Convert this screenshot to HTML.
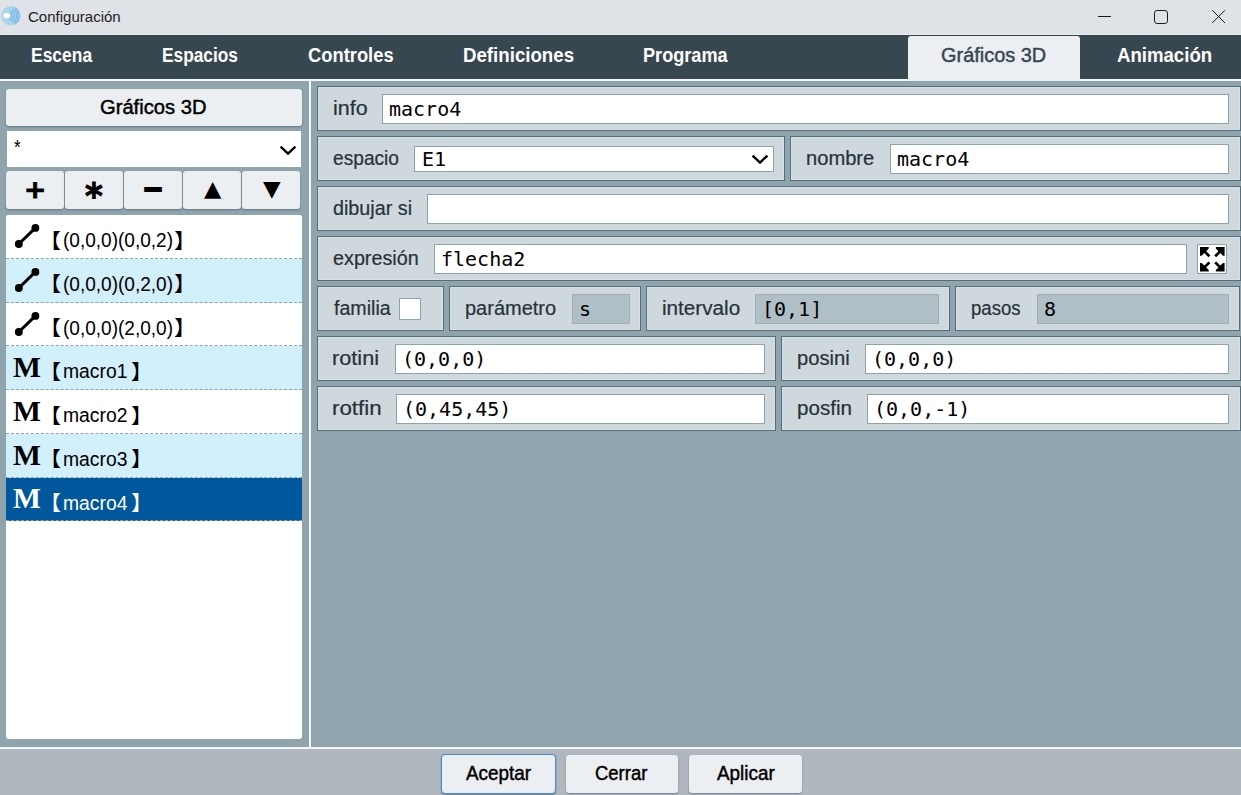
<!DOCTYPE html>
<html lang="es"><head><meta charset="utf-8"><title>Configuración</title>
<style>
html,body{margin:0;padding:0}
body{width:1241px;height:795px;overflow:hidden;background:#90a4ae;position:relative;font-family:'Liberation Sans',sans-serif}
div{position:absolute;box-sizing:border-box}
svg{position:absolute;overflow:visible}
.t{position:absolute;white-space:pre;line-height:1;transform-origin:0 0;display:block}
.btn{background:#eceff1;border-radius:3px;box-shadow:0 1px 2px rgba(40,60,70,.45)}
.row{background:#cfd8dc;border:1px solid #546e7a;box-shadow:inset 0 0 0 1px rgba(255,255,255,.22)}
.inp{background:#fff;border:1px solid #8fa3ad}
.dis{background:#b0bec5;border-color:#9eafb8}
</style></head>
<body>
<div style="left:0px;top:0px;width:1241px;height:35px;background:#dfe2e7;border-bottom:1px solid #e7e9ed"></div>
<svg width="22" height="22" viewBox="0 0 22 22" style="position:absolute;left:0;top:5px">
<circle cx="11" cy="10.8" r="9.8" fill="#a9d5ea"/>
<g fill="none" stroke="#6ab2ea" stroke-width="1.05">
<path d="M11.5 5.2a7 7 0 0 1 0 11.2"/><path d="M13.3 3.9a8.6 8.6 0 0 1 0 13.8"/><path d="M15.2 3.2a9.6 9.6 0 0 1 0 15.2"/><path d="M9.8 6.6a5.4 5.4 0 0 1 0 8.4"/>
</g>
<ellipse cx="6.8" cy="10.6" rx="3.5" ry="2.6" fill="#fff"/>
</svg>
<svg width="140" height="35" viewBox="0 0 140 35" style="position:absolute;left:1090px;top:0" fill="none" stroke="#1a1a1a" stroke-width="1">
<path d="M8 16.5H21"/><rect x="64.5" y="10.5" width="13" height="13" rx="2.6"/><path d="M122.2 10.2L135 23M135 10.2L122.2 23"/></svg>
<div style="left:0px;top:35px;width:1241px;height:44px;background:#37474f"></div>
<div style="left:0px;top:79px;width:1241px;height:2px;background:#f5f7f8"></div>
<div style="left:908px;top:36px;width:172px;height:45px;background:#eceff1;border-radius:3px 3px 0 0"></div>
<div style="left:309px;top:81px;width:2px;height:666px;background:#f5f7f8"></div>
<div style="left:0px;top:747px;width:1241px;height:2px;background:#f5f7f8"></div>
<div style="left:0px;top:749px;width:1241px;height:46px;background:#b0b7bf"></div>
<div class="btn" style="left:6px;top:89px;width:296px;height:37px;"></div>
<div style="left:7px;top:131px;width:294px;height:36px;background:#fff"></div>
<svg width="18" height="11" viewBox="0 0 18 11" style="position:absolute;left:279px;top:144.5px" fill="none" stroke="#000" stroke-width="2.4"><path d="M1.6 1.6L9 8.6L16.4 1.6"/></svg>
<div class="btn" style="left:6px;top:171px;width:58px;height:38px;"></div>
<div class="btn" style="left:65px;top:171px;width:58px;height:38px;"></div>
<div class="btn" style="left:124px;top:171px;width:58px;height:38px;"></div>
<div class="btn" style="left:183px;top:171px;width:58px;height:38px;"></div>
<div class="btn" style="left:242px;top:171px;width:58px;height:38px;"></div>
<div style="left:6px;top:215px;width:296px;height:524px;background:#fff;border-radius:3px"></div>
<div style="left:6px;top:215.0px;width:296px;height:43.75px;background:#fff;border-bottom:1px dashed #8fa3ad;box-sizing:border-box;border-radius:3px 3px 0 0;"></div>
<svg width="30" height="26" viewBox="0 0 30 26" style="position:absolute;left:12px;top:222.0px"><path d="M6.8 22L23.4 5.9" stroke="#000" stroke-width="3" fill="none"/><circle cx="6.8" cy="22" r="3.95"/><circle cx="23.4" cy="5.9" r="3.95"/></svg>
<div style="left:6px;top:258.75px;width:296px;height:43.75px;background:#d2effc;border-bottom:1px dashed #8fa3ad;box-sizing:border-box;"></div>
<svg width="30" height="26" viewBox="0 0 30 26" style="position:absolute;left:12px;top:265.75px"><path d="M6.8 22L23.4 5.9" stroke="#000" stroke-width="3" fill="none"/><circle cx="6.8" cy="22" r="3.95"/><circle cx="23.4" cy="5.9" r="3.95"/></svg>
<div style="left:6px;top:302.5px;width:296px;height:43.75px;background:#fff;border-bottom:1px dashed #8fa3ad;box-sizing:border-box;"></div>
<svg width="30" height="26" viewBox="0 0 30 26" style="position:absolute;left:12px;top:309.5px"><path d="M6.8 22L23.4 5.9" stroke="#000" stroke-width="3" fill="none"/><circle cx="6.8" cy="22" r="3.95"/><circle cx="23.4" cy="5.9" r="3.95"/></svg>
<div style="left:6px;top:346.25px;width:296px;height:43.75px;background:#d2effc;border-bottom:1px dashed #8fa3ad;box-sizing:border-box;"></div>
<div style="left:6px;top:390.0px;width:296px;height:43.75px;background:#fff;border-bottom:1px dashed #8fa3ad;box-sizing:border-box;"></div>
<div style="left:6px;top:433.75px;width:296px;height:43.75px;background:#d2effc;border-bottom:1px dashed #8fa3ad;box-sizing:border-box;"></div>
<div style="left:6px;top:477.5px;width:296px;height:43.75px;background:#01579b;border-bottom:1px dashed #8fa3ad;box-sizing:border-box;"></div>
<div class="row" style="left:317px;top:86px;width:924px;height:45px;"></div>
<div class="inp" style="left:382px;top:94px;width:847px;height:30px;"></div>
<div class="row" style="left:317px;top:136px;width:468px;height:45px;"></div>
<div class="inp" style="left:414px;top:146px;width:360px;height:26px;"></div>
<svg width="18" height="11" viewBox="0 0 18 11" style="position:absolute;left:751px;top:153.5px" fill="none" stroke="#000" stroke-width="2.4"><path d="M1.6 1.6L9 8.6L16.4 1.6"/></svg>
<div class="row" style="left:790px;top:136px;width:451px;height:45px;"></div>
<div class="inp" style="left:890px;top:144px;width:339px;height:30px;"></div>
<div class="row" style="left:317px;top:186px;width:924px;height:45px;"></div>
<div class="inp" style="left:427px;top:194px;width:802px;height:30px;"></div>
<div class="row" style="left:317px;top:236px;width:924px;height:45px;"></div>
<div class="inp" style="left:434px;top:244px;width:753px;height:30px;"></div>
<div class="inp" style="left:1197px;top:244px;width:30px;height:30px;"></div>
<svg width="30" height="30" viewBox="0 0 30 30" style="position:absolute;left:1197px;top:244px" fill="#000">
<path d="M3 3.1H11.75V4.6L9.15 7.2L13.35 11.25L11.45 13.15L7.25 9.1L4.6 11.7H3Z"/>
<path transform="translate(30.6,0) scale(-1,1)" d="M3 3.1H11.75V4.6L9.15 7.2L13.35 11.25L11.45 13.15L7.25 9.1L4.6 11.7H3Z"/>
<path transform="translate(0,30.6) scale(1,-1)" d="M3 3.1H11.75V4.6L9.15 7.2L13.35 11.25L11.45 13.15L7.25 9.1L4.6 11.7H3Z"/>
<path transform="translate(30.6,30.6) scale(-1,-1)" d="M3 3.1H11.75V4.6L9.15 7.2L13.35 11.25L11.45 13.15L7.25 9.1L4.6 11.7H3Z"/>
</svg>
<div class="row" style="left:317px;top:286px;width:127px;height:45px;"></div>
<div style="left:399px;top:298px;width:22px;height:22px;background:#fff;border:1px solid #90a4ae;box-sizing:border-box"></div>
<div class="row" style="left:449px;top:286px;width:192px;height:45px;"></div>
<div class="inp dis" style="left:572px;top:294px;width:58px;height:30px;"></div>
<div class="row" style="left:646px;top:286px;width:304px;height:45px;"></div>
<div class="inp dis" style="left:755px;top:294px;width:184px;height:30px;"></div>
<div class="row" style="left:955px;top:286px;width:285px;height:45px;"></div>
<div class="inp dis" style="left:1037px;top:294px;width:192px;height:30px;"></div>
<div class="row" style="left:317px;top:336px;width:459px;height:45px;"></div>
<div class="inp" style="left:395px;top:344px;width:370px;height:30px;"></div>
<div class="row" style="left:781px;top:336px;width:460px;height:45px;"></div>
<div class="inp" style="left:865px;top:344px;width:364px;height:30px;"></div>
<div class="row" style="left:317px;top:386px;width:459px;height:45px;"></div>
<div class="inp" style="left:396px;top:394px;width:369px;height:30px;"></div>
<div class="row" style="left:781px;top:386px;width:460px;height:45px;"></div>
<div class="inp" style="left:867px;top:394px;width:362px;height:30px;"></div>
<div class="btn" style="left:441px;top:754px;width:115px;height:40px;border:1px solid #3b8ee0;box-sizing:border-box;border-radius:4px"></div>
<div class="btn" style="left:566px;top:755px;width:112px;height:38px;"></div>
<div class="btn" style="left:689px;top:755px;width:113px;height:38px;"></div>
<span class="t" style="left:27.75px;top:9.30px;font-size:15.2px;font-family:'Liberation Sans', sans-serif;color:#1e1e1e;transform:scaleX(0.9891);">Configuración</span>
<span class="t" style="left:30.63px;top:44.80px;font-size:20px;font-weight:bold;font-family:'Liberation Sans', sans-serif;color:#fff;transform:scaleX(0.8724);">Escena</span>
<span class="t" style="left:162.13px;top:44.80px;font-size:20px;font-weight:bold;font-family:'Liberation Sans', sans-serif;color:#fff;transform:scaleX(0.8651);">Espacios</span>
<span class="t" style="left:308.25px;top:44.80px;font-size:20px;font-weight:bold;font-family:'Liberation Sans', sans-serif;color:#fff;transform:scaleX(0.9172);">Controles</span>
<span class="t" style="left:463.32px;top:44.80px;font-size:20px;font-weight:bold;font-family:'Liberation Sans', sans-serif;color:#fff;transform:scaleX(0.9338);">Definiciones</span>
<span class="t" style="left:643.34px;top:44.80px;font-size:20px;font-weight:bold;font-family:'Liberation Sans', sans-serif;color:#fff;transform:scaleX(0.9062);">Programa</span>
<span class="t" style="left:1116.50px;top:44.80px;font-size:20px;font-weight:bold;font-family:'Liberation Sans', sans-serif;color:#fff;transform:scaleX(0.9305);">Animación</span>
<span class="t" style="left:941.25px;top:44.80px;font-size:20px;font-family:'Liberation Sans', sans-serif;color:#37474f;transform:scaleX(0.9962);-webkit-text-stroke:0.45px currentColor;">Gráficos 3D</span>
<span class="t" style="left:100.29px;top:97.00px;font-size:20px;font-family:'Liberation Sans', sans-serif;color:#000;transform:scaleX(1.0082);-webkit-text-stroke:0.45px currentColor;">Gráficos 3D</span>
<span class="t" style="left:14.40px;top:137.00px;font-size:20px;font-family:'Liberation Sans', sans-serif;color:#000;transform:scaleX(0.8562);">*</span>
<span class="t" style="left:24.11px;top:177.18px;font-size:28px;font-weight:bold;font-family:'DejaVu Sans', 'Liberation Sans', sans-serif;color:#000;transform:scale(0.9477,0.9031);-webkit-text-stroke:1px #000;">+</span>
<span class="t" style="left:85.07px;top:178.52px;font-size:37px;font-weight:bold;font-family:'DejaVu Sans', 'Liberation Sans', sans-serif;color:#000;transform:scale(0.9189,0.9486);-webkit-text-stroke:1px #000;">*</span>
<span class="t" style="left:141.35px;top:167.94px;font-size:28px;font-weight:bold;font-family:'DejaVu Sans', 'Liberation Sans', sans-serif;color:#000;transform:scale(1.0091,1.5429);">−</span>
<span class="t" style="left:203.50px;top:177.85px;font-size:22px;font-family:'DejaVu Sans', 'Liberation Sans', sans-serif;color:#000;transform:scale(1.0237,0.9882);">▲</span>
<span class="t" style="left:262.80px;top:177.75px;font-size:22px;font-family:'DejaVu Sans', 'Liberation Sans', sans-serif;color:#000;transform:scale(1.0414,0.9882);">▼</span>
<span class="t" style="left:38.78px;top:229.58px;font-size:20px;font-family:'Noto Sans CJK SC', 'Liberation Sans', sans-serif;color:#000;transform:scale(1.1066,1.0160);">【</span>
<span class="t" style="left:62.80px;top:230.00px;font-size:20px;font-family:'Liberation Sans', sans-serif;color:#000;transform:scaleX(0.9518);">(0,0,0)(0,0,2)</span>
<span class="t" style="left:173.64px;top:229.58px;font-size:20px;font-family:'Noto Sans CJK SC', 'Liberation Sans', sans-serif;color:#000;transform:scale(1.0984,1.0160);">】</span>
<span class="t" style="left:38.78px;top:273.33px;font-size:20px;font-family:'Noto Sans CJK SC', 'Liberation Sans', sans-serif;color:#000;transform:scale(1.1066,1.0160);">【</span>
<span class="t" style="left:62.80px;top:273.75px;font-size:20px;font-family:'Liberation Sans', sans-serif;color:#000;transform:scaleX(0.9518);">(0,0,0)(0,2,0)</span>
<span class="t" style="left:173.64px;top:273.33px;font-size:20px;font-family:'Noto Sans CJK SC', 'Liberation Sans', sans-serif;color:#000;transform:scale(1.0984,1.0160);">】</span>
<span class="t" style="left:38.78px;top:317.08px;font-size:20px;font-family:'Noto Sans CJK SC', 'Liberation Sans', sans-serif;color:#000;transform:scale(1.1066,1.0160);">【</span>
<span class="t" style="left:62.80px;top:317.50px;font-size:20px;font-family:'Liberation Sans', sans-serif;color:#000;transform:scaleX(0.9518);">(0,0,0)(2,0,0)</span>
<span class="t" style="left:173.64px;top:317.08px;font-size:20px;font-family:'Noto Sans CJK SC', 'Liberation Sans', sans-serif;color:#000;transform:scale(1.0984,1.0160);">】</span>
<span class="t" style="left:13.29px;top:353.13px;font-size:28px;font-weight:bold;font-family:'Liberation Serif', serif;color:#000;transform:scale(1.0581,1.0476);">M</span>
<span class="t" style="left:38.78px;top:360.83px;font-size:20px;font-family:'Noto Sans CJK SC', 'Liberation Sans', sans-serif;color:#000;transform:scale(1.1066,1.0160);">【</span>
<span class="t" style="left:62.53px;top:361.25px;font-size:20px;font-family:'Liberation Sans', sans-serif;color:#000;transform:scaleX(0.9670);">macro1</span>
<span class="t" style="left:130.56px;top:360.83px;font-size:20px;font-family:'Noto Sans CJK SC', 'Liberation Sans', sans-serif;color:#000;transform:scale(1.0738,1.0160);">】</span>
<span class="t" style="left:13.29px;top:396.88px;font-size:28px;font-weight:bold;font-family:'Liberation Serif', serif;color:#000;transform:scale(1.0581,1.0476);">M</span>
<span class="t" style="left:38.78px;top:404.58px;font-size:20px;font-family:'Noto Sans CJK SC', 'Liberation Sans', sans-serif;color:#000;transform:scale(1.1066,1.0160);">【</span>
<span class="t" style="left:62.53px;top:405.00px;font-size:20px;font-family:'Liberation Sans', sans-serif;color:#000;transform:scaleX(0.9670);">macro2</span>
<span class="t" style="left:130.56px;top:404.58px;font-size:20px;font-family:'Noto Sans CJK SC', 'Liberation Sans', sans-serif;color:#000;transform:scale(1.0738,1.0160);">】</span>
<span class="t" style="left:13.29px;top:440.63px;font-size:28px;font-weight:bold;font-family:'Liberation Serif', serif;color:#000;transform:scale(1.0581,1.0476);">M</span>
<span class="t" style="left:38.78px;top:448.33px;font-size:20px;font-family:'Noto Sans CJK SC', 'Liberation Sans', sans-serif;color:#000;transform:scale(1.1066,1.0160);">【</span>
<span class="t" style="left:62.53px;top:448.75px;font-size:20px;font-family:'Liberation Sans', sans-serif;color:#000;transform:scaleX(0.9670);">macro3</span>
<span class="t" style="left:130.56px;top:448.33px;font-size:20px;font-family:'Noto Sans CJK SC', 'Liberation Sans', sans-serif;color:#000;transform:scale(1.0738,1.0160);">】</span>
<span class="t" style="left:13.29px;top:484.38px;font-size:28px;font-weight:bold;font-family:'Liberation Serif', serif;color:#fff;transform:scale(1.0581,1.0476);">M</span>
<span class="t" style="left:38.78px;top:492.08px;font-size:20px;font-family:'Noto Sans CJK SC', 'Liberation Sans', sans-serif;color:#fff;transform:scale(1.1066,1.0160);">【</span>
<span class="t" style="left:62.53px;top:492.50px;font-size:20px;font-family:'Liberation Sans', sans-serif;color:#fff;transform:scaleX(0.9670);">macro4</span>
<span class="t" style="left:130.56px;top:492.08px;font-size:20px;font-family:'Noto Sans CJK SC', 'Liberation Sans', sans-serif;color:#fff;transform:scale(1.0738,1.0160);">】</span>
<span class="t" style="left:333.03px;top:97.60px;font-size:20px;font-family:'Liberation Sans', sans-serif;color:#263238;transform:scaleX(1.0732);-webkit-text-stroke:0.2px currentColor;">info</span>
<span class="t" style="left:389.00px;top:99.00px;font-size:20px;font-family:'DejaVu Sans Mono', 'Liberation Mono', monospace;color:#000;">macro4</span>
<span class="t" style="left:333.10px;top:147.60px;font-size:20px;font-family:'Liberation Sans', sans-serif;color:#263238;transform:scaleX(0.9577);-webkit-text-stroke:0.2px currentColor;">espacio</span>
<span class="t" style="left:422.00px;top:149.00px;font-size:20px;font-family:'DejaVu Sans Mono', 'Liberation Mono', monospace;color:#000;">E1</span>
<span class="t" style="left:806.24px;top:147.60px;font-size:20px;font-family:'Liberation Sans', sans-serif;color:#263238;transform:scaleX(1.0069);-webkit-text-stroke:0.2px currentColor;">nombre</span>
<span class="t" style="left:897.00px;top:149.00px;font-size:20px;font-family:'DejaVu Sans Mono', 'Liberation Mono', monospace;color:#000;">macro4</span>
<span class="t" style="left:333.20px;top:197.60px;font-size:20px;font-family:'Liberation Sans', sans-serif;color:#263238;transform:scaleX(0.9875);-webkit-text-stroke:0.2px currentColor;">dibujar si</span>
<span class="t" style="left:333.20px;top:247.60px;font-size:20px;font-family:'Liberation Sans', sans-serif;color:#263238;transform:scaleX(0.9884);-webkit-text-stroke:0.2px currentColor;">expresión</span>
<span class="t" style="left:441.00px;top:249.00px;font-size:20px;font-family:'DejaVu Sans Mono', 'Liberation Mono', monospace;color:#000;">flecha2</span>
<span class="t" style="left:333.50px;top:297.60px;font-size:20px;font-family:'Liberation Sans', sans-serif;color:#263238;transform:scaleX(0.9801);-webkit-text-stroke:0.2px currentColor;">familia</span>
<span class="t" style="left:465.25px;top:297.60px;font-size:20px;font-family:'Liberation Sans', sans-serif;color:#263238;transform:scaleX(0.9997);-webkit-text-stroke:0.2px currentColor;">parámetro</span>
<span class="t" style="left:579.00px;top:299.00px;font-size:20px;font-family:'DejaVu Sans Mono', 'Liberation Mono', monospace;color:#000;">s</span>
<span class="t" style="left:661.97px;top:297.60px;font-size:20px;font-family:'Liberation Sans', sans-serif;color:#263238;transform:scaleX(1.0339);-webkit-text-stroke:0.2px currentColor;">intervalo</span>
<span class="t" style="left:762.00px;top:299.00px;font-size:20px;font-family:'DejaVu Sans Mono', 'Liberation Mono', monospace;color:#000;">[0,1]</span>
<span class="t" style="left:971.32px;top:297.60px;font-size:20px;font-family:'Liberation Sans', sans-serif;color:#263238;transform:scaleX(0.9309);-webkit-text-stroke:0.2px currentColor;">pasos</span>
<span class="t" style="left:1044.00px;top:299.00px;font-size:20px;font-family:'DejaVu Sans Mono', 'Liberation Mono', monospace;color:#000;">8</span>
<span class="t" style="left:332.16px;top:347.60px;font-size:20px;font-family:'Liberation Sans', sans-serif;color:#263238;transform:scaleX(1.0858);-webkit-text-stroke:0.2px currentColor;">rotini</span>
<span class="t" style="left:402.00px;top:349.00px;font-size:20px;font-family:'DejaVu Sans Mono', 'Liberation Mono', monospace;color:#000;">(0,0,0)</span>
<span class="t" style="left:796.99px;top:347.60px;font-size:20px;font-family:'Liberation Sans', sans-serif;color:#263238;transform:scaleX(1.0086);-webkit-text-stroke:0.2px currentColor;">posini</span>
<span class="t" style="left:872.00px;top:349.00px;font-size:20px;font-family:'DejaVu Sans Mono', 'Liberation Mono', monospace;color:#000;">(0,0,0)</span>
<span class="t" style="left:332.13px;top:397.60px;font-size:20px;font-family:'Liberation Sans', sans-serif;color:#263238;transform:scaleX(1.1160);-webkit-text-stroke:0.2px currentColor;">rotfin</span>
<span class="t" style="left:403.00px;top:399.00px;font-size:20px;font-family:'DejaVu Sans Mono', 'Liberation Mono', monospace;color:#000;">(0,45,45)</span>
<span class="t" style="left:796.97px;top:397.60px;font-size:20px;font-family:'Liberation Sans', sans-serif;color:#263238;transform:scaleX(1.0293);-webkit-text-stroke:0.2px currentColor;">posfin</span>
<span class="t" style="left:874.00px;top:399.00px;font-size:20px;font-family:'DejaVu Sans Mono', 'Liberation Mono', monospace;color:#000;">(0,0,-1)</span>
<span class="t" style="left:465.60px;top:763.00px;font-size:20px;font-family:'Liberation Sans', sans-serif;color:#000;transform:scaleX(0.9442);-webkit-text-stroke:0.45px currentColor;">Aceptar</span>
<span class="t" style="left:595.33px;top:763.00px;font-size:20px;font-family:'Liberation Sans', sans-serif;color:#000;transform:scaleX(0.9239);-webkit-text-stroke:0.45px currentColor;">Cerrar</span>
<span class="t" style="left:717.00px;top:763.00px;font-size:20px;font-family:'Liberation Sans', sans-serif;color:#000;transform:scaleX(0.9435);-webkit-text-stroke:0.45px currentColor;">Aplicar</span>
</body></html>
